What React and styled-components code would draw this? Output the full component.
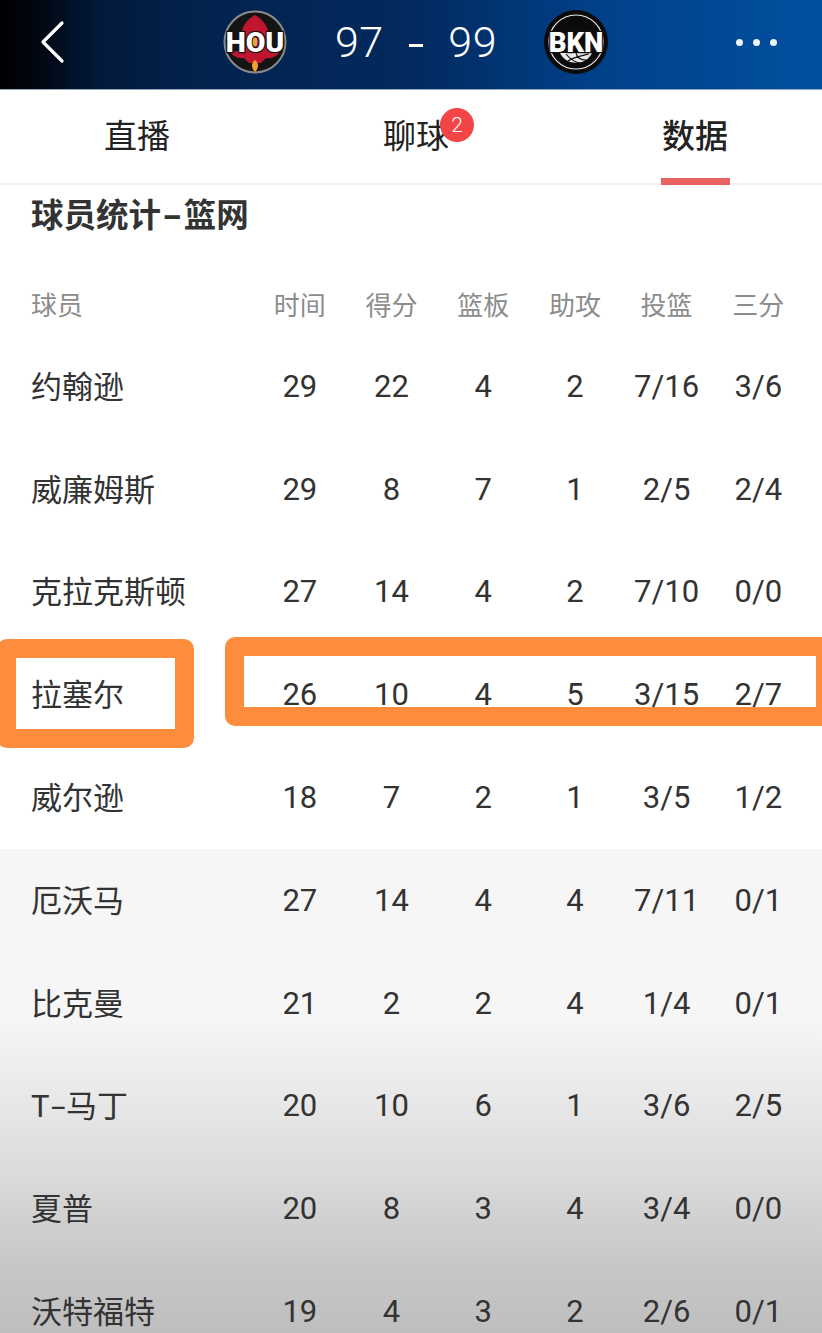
import React from "react";
import styled, { createGlobalStyle } from "styled-components";

const FONT = `Roboto, "Noto Sans CJK SC", sans-serif`;

const GlobalStyle = createGlobalStyle`
  html, body {
    margin: 0;
    padding: 0;
    background: #fff;
    font-family: ${FONT};
  }
`;

const Page = styled.div`
  position: relative;
  width: 822px;
  height: 1333px;
  overflow: hidden;
  background: #fff;
`;

const Header = styled.header`
  display: flex;
  align-items: center;
  box-sizing: border-box;
  height: 90px;
  padding: 0 45px 5px 40px;
  background: linear-gradient(90deg, #000 0%, #010a18 6%, #021a3a 12%, #03234e 25%, #02295e 50%, #01418a 73%, #00509f 100%);
  border-bottom: 1px solid #8fa7bd;
`;

const BackButton = styled.div`
  display: flex;
  width: 183px;
`;

const Logo = styled.svg`
  display: block;
  width: 64px;
  height: 64px;
`;

const Score = styled.div`
  display: flex;
  justify-content: space-between;
  align-items: center;
  box-sizing: border-box;
  width: 257px;
  padding: 0 47px 0 48px;
  color: #fff;
  font-size: 43px;
  font-weight: 300;
  letter-spacing: 0.5px;
`;

const Dash = styled.span`
  width: 14px;
  height: 3px;
  margin-top: 6px;
  background: #fff;
`;

const MoreDots = styled.div`
  display: flex;
  gap: 10px;
  margin-left: auto;
`;

const Dot = styled.span`
  width: 7px;
  height: 7px;
  border-radius: 50%;
  background: #eef4fb;
`;

const Tabs = styled.nav`
  display: flex;
  gap: 210px;
  height: 95px;
  box-sizing: border-box;
  padding-left: 102.5px;
  border-bottom: 2px solid #f2f2f2;
`;

const Tab = styled.div`
  position: relative;
  display: flex;
  justify-content: center;
  align-items: center;
  width: 69px;
  flex: none;
  padding-bottom: 5px;
  color: #222;
  font-size: 33px;
  white-space: nowrap;
  font-weight: ${(p) => (p.$active ? 500 : 400)};
`;

const TabLabel = styled.span`
  position: relative;
`;

const Badge = styled.span`
  position: absolute;
  top: -2px;
  right: -25px;
  display: flex;
  justify-content: center;
  align-items: center;
  width: 34px;
  height: 34px;
  border-radius: 50%;
  background: #f24545;
  color: #fff;
  font-size: 21px;
  font-weight: 300;
`;

const Underline = styled.span`
  position: absolute;
  left: 0;
  bottom: -2px;
  width: 69px;
  height: 7px;
  background: #e86262;
`;

const SectionTitle = styled.h2`
  margin: 0;
  padding: 11px 0 0 31px;
  height: 88px;
  box-sizing: border-box;
  color: #333;
  font-size: 32.5px;
  line-height: 40px;
  font-weight: 700;
`;

const Hyphen = styled.span`
  display: inline-block;
  margin: 0 ${(p) => p.$space}px;
  transform: scaleX(1.7);
`;

const Row = styled.div`
  position: relative;
  display: grid;
  grid-template-columns: 223px repeat(6, 91.7px);
  align-items: center;
  height: ${(p) => (p.$head ? "60px" : "102.8px")};
  padding-left: 31px;
  padding-bottom: ${(p) => (p.$head ? "2px" : "0")};
  color: ${(p) => (p.$head ? "#8c8c8c" : "#333")};
  font-size: ${(p) => (p.$head ? "26px" : "31px")};
`;

const Name = styled.div`
  padding-bottom: ${(p) => (p.$head ? "0" : "4px")};
`;

const Cell = styled.div`
  text-align: center;
`;

const FadedRows = styled.div`
  background: linear-gradient(180deg, #f6f6f6 0%, #f6f6f6 33%, #dcdcdc 62%, #c8c8c8 80%, #bababa 100%);
`;

const Frame = styled.div`
  position: absolute;
  box-sizing: border-box;
  border: 19px solid #fd8c3c;
  border-radius: 10px;
  background: transparent;
`;

const NameFrame = styled(Frame)`
  top: -4px;
  left: -3px;
  width: 197px;
  height: 109px;
`;

const StatsFrame = styled(Frame)`
  top: -6px;
  left: 225px;
  width: 610px;
  height: 89px;
`;

const COLUMNS = ["时间", "得分", "篮板", "助攻", "投篮", "三分"];

const PLAYERS = [
  ["约翰逊", "29", "22", "4", "2", "7/16", "3/6"],
  ["威廉姆斯", "29", "8", "7", "1", "2/5", "2/4"],
  ["克拉克斯顿", "27", "14", "4", "2", "7/10", "0/0"],
  ["拉塞尔", "26", "10", "4", "5", "3/15", "2/7"],
  ["威尔逊", "18", "7", "2", "1", "3/5", "1/2"],
  ["厄沃马", "27", "14", "4", "4", "7/11", "0/1"],
  ["比克曼", "21", "2", "2", "4", "1/4", "0/1"],
  ["T-马丁", "20", "10", "6", "1", "3/6", "2/5"],
  ["夏普", "20", "8", "3", "4", "3/4", "0/0"],
  ["沃特福特", "19", "4", "3", "2", "2/6", "0/1"],
];

const HIGHLIGHTED = "拉塞尔";

// the app's font draws a much wider hyphen than Roboto
const WideHyphen = ({ text, space }) => {
  const [before, after] = text.split("-");
  if (after === undefined) return text;
  return (
    <>
      {before}
      <Hyphen $space={space}>-</Hyphen>
      {after}
    </>
  );
};

const LogoText = ({ children, size }) => (
  <text
    x="32"
    y="42"
    textAnchor="middle"
    fontFamily="Roboto, sans-serif"
    fontWeight="900"
    fontSize={size}
    fill="#fff"
    stroke="#111"
    strokeWidth="2.4"
    paintOrder="stroke"
  >
    {children}
  </text>
);

const HoustonLogo = () => (
  <Logo viewBox="0 0 64 64">
    <circle cx="32" cy="32" r="30.5" fill="#141414" stroke="#8a8a8a" strokeWidth="2" />
    <path
      d="M32 5 C41 10 47 19 46 30 L46 40 C50 42 54 42 58 40 C55 46 49 49 43 48 L38 53 L26 53 L21 48 C15 49 9 46 6 40 C10 42 14 42 18 40 L18 30 C17 19 23 10 32 5 Z"
      fill="#c0152f"
    />
    <path d="M32 50 C36 53 36 58 32 62 C28 58 28 53 32 50 Z" fill="#f5a02c" />
    <LogoText size={28.5}>HOU</LogoText>
    <ellipse cx="32" cy="32" rx="2.4" ry="4.4" fill="#d9a441" />
  </Logo>
);

const BrooklynLogo = () => (
  <Logo viewBox="0 0 64 64">
    <circle cx="32" cy="32" r="32" fill="#0b0b0b" />
    <circle cx="32" cy="32" r="27" fill="none" stroke="#e8e8e8" strokeWidth="1.2" />
    <path d="M16 43 C22 56 42 56 48 43 Z" fill="#e8e8e8" />
    <path d="M22 44 C26 49 30 52 36 53 M32 43 C33 47 36 50 42 50 M24 51 C29 47 36 46 45 44" fill="none" stroke="#111" strokeWidth="1.2" />
    <LogoText size={27.5}>BKN</LogoText>
  </Logo>
);

const PlayerRow = ({ player }) => {
  const [name, ...stats] = player;
  return (
    <Row>
      <Name>
        <WideHyphen text={name} space={4} />
      </Name>
      {stats.map((value, i) => (
        <Cell key={i}>{value}</Cell>
      ))}
      {name === HIGHLIGHTED && (
        <>
          <NameFrame />
          <StatsFrame />
        </>
      )}
    </Row>
  );
};

const App = () => {
  return (
    <Page>
      <GlobalStyle />
      <Header>
        <BackButton>
          <svg width="26" height="44" viewBox="0 0 26 44">
            <path d="M22 3 L3 22 L22 41" fill="none" stroke="#fff" strokeWidth="3.2" strokeLinecap="round" strokeLinejoin="round" />
          </svg>
        </BackButton>
        <HoustonLogo />
        <Score>
          <span>97</span>
          <Dash />
          <span>99</span>
        </Score>
        <BrooklynLogo />
        <MoreDots>
          <Dot />
          <Dot />
          <Dot />
        </MoreDots>
      </Header>
      <Tabs>
        <Tab>直播</Tab>
        <Tab>
          <TabLabel>
            聊球
            <Badge>2</Badge>
          </TabLabel>
        </Tab>
        <Tab $active>
          数据
          <Underline />
        </Tab>
      </Tabs>
      <SectionTitle>
        <WideHyphen text="球员统计-篮网" space={5} />
      </SectionTitle>
      <Row $head>
        <Name $head>球员</Name>
        {COLUMNS.map((c) => (
          <Cell key={c}>{c}</Cell>
        ))}
      </Row>
      {PLAYERS.slice(0, 5).map((p) => (
        <PlayerRow key={p[0]} player={p} />
      ))}
      <FadedRows>
        {PLAYERS.slice(5).map((p) => (
          <PlayerRow key={p[0]} player={p} />
        ))}
      </FadedRows>
    </Page>
  );
};

export default App;
